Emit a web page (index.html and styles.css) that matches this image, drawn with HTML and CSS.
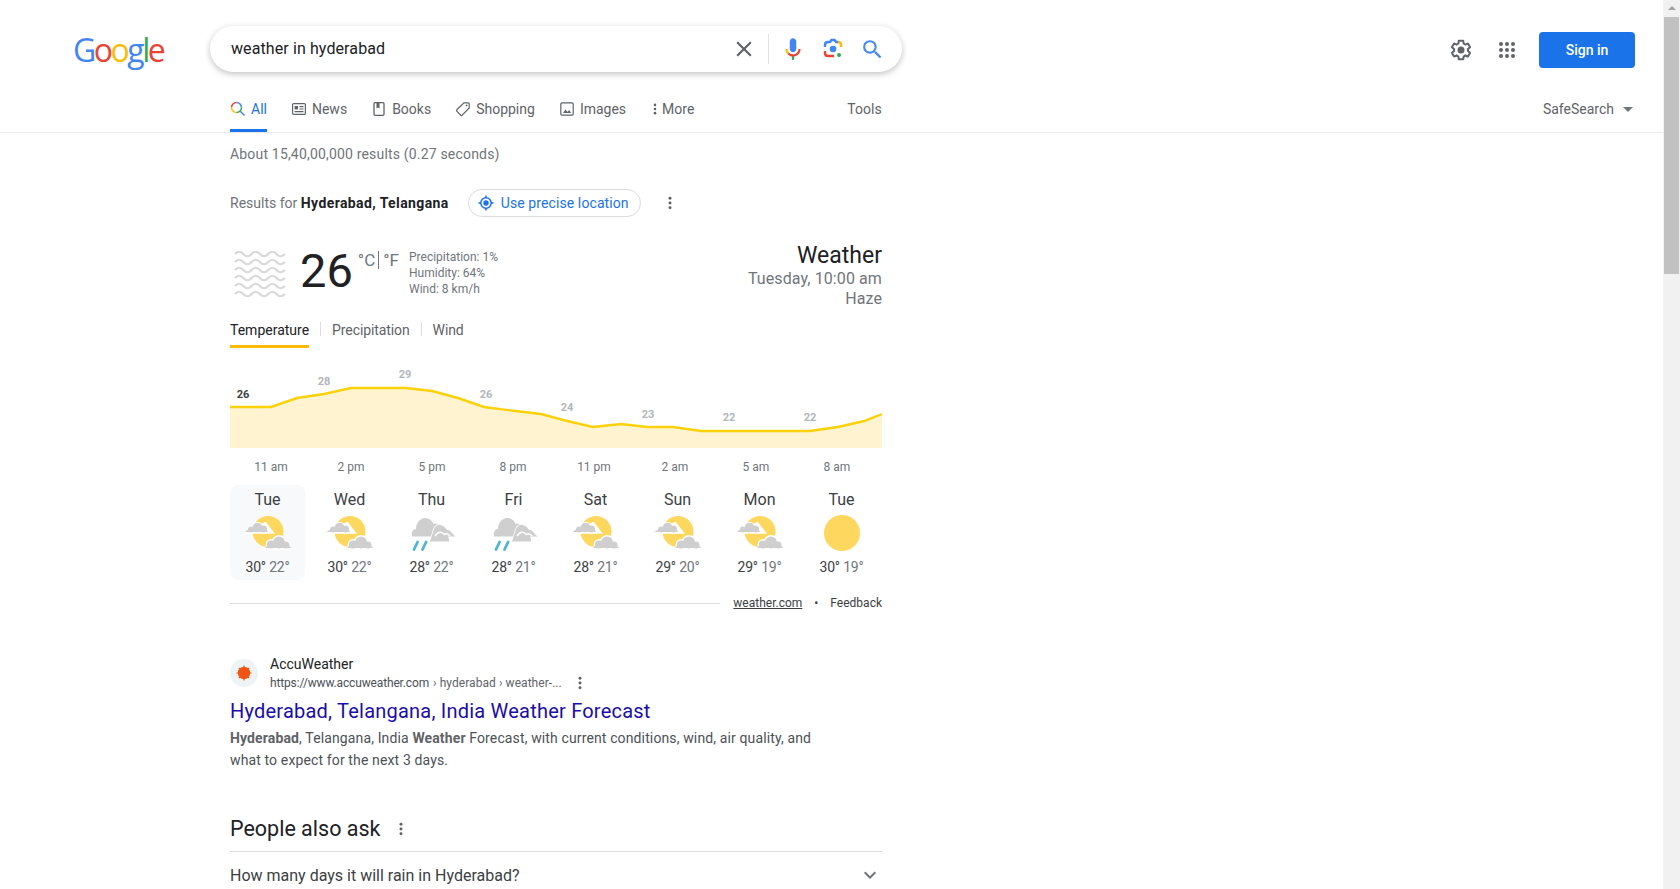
FILE: index.html
```html
<!DOCTYPE html>
<html lang="en">
<head>
    <meta charset="UTF-8">
    <title>weather in hyderabad - Google Search</title>
    <link rel="stylesheet" href="styles.css">
</head>
<body>
    <!-- shared weather icons -->
    <svg class="defs" width="0" height="0">
        <symbol id="partly" viewBox="0 0 48 48">
            <circle cx="24" cy="22.500" r="15.500" fill="#fed75f"/>
            <path d="M21 13l8.500 11H0" fill="#fff" stroke="#fff" stroke-width="1.400"/>
            <!-- top cloud -->
            <g fill="#fff">
                <circle cx="7" cy="20.500" r="4"/><circle cx="13.500" cy="18.500" r="5.800"/><circle cx="19.500" cy="20" r="4.500"/>
            </g>
            <g fill="#cfcfcf">
                <circle cx="7" cy="20.500" r="3"/><circle cx="13.500" cy="18.500" r="4.800"/><circle cx="19.500" cy="20" r="3.500"/>
                <path d="M.5 23 4 20.500h18l2.500 2.500z"/>
            </g>
            <!-- bottom cloud -->
            <g fill="#fff">
                <circle cx="27" cy="35.500" r="5.400"/><circle cx="35" cy="33.500" r="7.400"/><circle cx="42" cy="36" r="4.900"/>
                <path d="M19 40.500h30L42 32H26z"/>
            </g>
            <g fill="#cfcfcf">
                <circle cx="27" cy="35.500" r="4"/><circle cx="35" cy="33.500" r="6"/><circle cx="42" cy="36" r="3.500"/>
                <path d="M21 39l3-3.500h19.500l4 3.500z"/>
            </g>
        </symbol>
        <symbol id="rainy" viewBox="0 0 48 48">
            <path d="M4 27.500C3 23 5 20 8 20c0-6 4-11 9-11 4 0 7 2 8.500 6 2.500-1 4.500 0 5.500 2l-5 10.500z" fill="#cfcfcf"/>
            <path d="M22 32.500 26 20c1-3 4-5 7-4 3 1 5 3 6 5 2-.5 4 1 5 3l3.500 3.500H40c1 1.500 1 3.500 1 5z" fill="#cfcfcf" stroke="#fff" stroke-width="1.600" paint-order="stroke"/>
            <path d="M27 27c3-5 7-4.500 9.500-1.500 2-1.500 4-.5 5.500 1.500" fill="none" stroke="#fff" stroke-width="1.500"/>
            <path d="M6 40.500l3.600-7.500M14.500 40.500l3.600-7.500" stroke="#4fb6d2" stroke-width="2.800" stroke-linecap="round" fill="none"/>
        </symbol>
        <symbol id="sunny" viewBox="0 0 48 48">
            <circle cx="24" cy="24" r="18" fill="#fed75f"/>
        </symbol>
        <symbol id="dots" viewBox="0 0 4 16">
            <circle cx="2" cy="2.500" r="1.700"/>
            <circle cx="2" cy="8" r="1.700"/>
            <circle cx="2" cy="13.500" r="1.700"/>
        </symbol>
    </svg>

    <div class="page">
        <header class="header">
            <div class="top-row">
                <a class="logo"><span class="g-blue">G</span><span class="g-red">o</span><span class="g-yellow">o</span><span class="g-blue">g</span><span class="g-green">l</span><span class="g-red">e</span></a>

                <div class="search-box">
                    <div class="query">weather in hyderabad</div>
                    <svg class="icon-clear" viewBox="0 0 24 24"><path fill="#5f6368" d="M19 6.410 17.590 5 12 10.590 6.410 5 5 6.410 10.590 12 5 17.590 6.410 19 12 13.410 17.590 19 19 17.590 13.410 12z"/></svg>
                    <span class="search-sep"></span>
                    <svg class="icon-mic" viewBox="0 0 24 24">
                        <path fill="#4285f4" d="m12 15c1.660 0 3-1.310 3-2.970v-7.020c0-1.660-1.340-3.010-3-3.010s-3 1.340-3 3.010v7.020c0 1.660 1.340 2.970 3 2.970z"/>
                        <path fill="#34a853" d="m11 18.080h2v3.920h-2z"/>
                        <path fill="#fbbc05" d="m7.050 16.870c-1.270-1.330-2.050-2.830-2.050-4.870h2c0 1.450 .56 2.420 1.470 3.380v.32l-1.150 1.180z"/>
                        <path fill="#ea4335" d="m12 16.930a4.970 5.250 0 0 1 -3.540 -1.550l-1.410 1.490c1.260 1.340 3.020 2.130 4.950 2.130 3.870 0 6.990-2.920 6.990-6.990h-1.990c0 2.920-2.240 4.920-4.990 4.920z"/>
                    </svg>
                    <svg class="icon-lens" viewBox="0 0 24 24" fill="none" stroke-width="2.400">
                        <path stroke="#4285f4" d="M4 10V8c0-2 1.200-3 3-3h2l1.500-2h3L15 5h2"/>
                        <path stroke="#fbbc05" d="M17 5c2 0 3 1 3 3v2"/>
                        <path stroke="#ea4335" d="M4 14v2c0 2 1.200 3 3 3h6"/>
                        <circle cx="12" cy="12" r="3.300" fill="#4285f4" stroke="none"/>
                        <circle cx="18" cy="18" r="2" fill="#34a853" stroke="none"/>
                    </svg>
                    <svg class="icon-search" viewBox="0 0 24 24"><path fill="#4285f4" d="M15.500 14h-.79l-.28-.27A6.471 6.471 0 0 0 16 9.500 6.500 6.500 0 1 0 9.500 16c1.610 0 3.090-.59 4.230-1.570l.27.28v.79l5 4.990L20.490 19l-4.990-5zm-6 0C7.010 14 5 11.990 5 9.500S7.010 5 9.500 5 14 7.010 14 9.500 11.990 14 9.500 14z"/></svg>
                </div>

                <div class="header-right">
                    <svg class="icon-gear" viewBox="0 0 24 24"><path fill="#5f6368" d="M13.850 22.250h-3.700c-.74 0-1.360-.54-1.450-1.270l-.27-1.890c-.27-.14-.53-.29-.79-.46l-1.800.72c-.7.26-1.470-.03-1.810-.65L2.200 15.530c-.35-.66-.2-1.440.36-1.880l1.530-1.190c-.01-.15-.02-.3-.02-.46 0-.15.01-.31.02-.46l-1.520-1.190c-.59-.45-.74-1.260-.37-1.880l1.850-3.190c.34-.62 1.110-.9 1.790-.63l1.810.73c.26-.17.52-.32.78-.46l.27-1.910c.09-.7.71-1.250 1.440-1.250h3.700c.74 0 1.360.54 1.450 1.270l.27 1.890c.27.14.53.29.79.46l1.800-.72c.71-.26 1.480.03 1.820.65l1.840 3.180c.36.66.2 1.440-.36 1.880l-1.520 1.190c.01.15.02.3.02.46s-.01.31-.02.46l1.520 1.190c.56.45.72 1.230.37 1.860l-1.860 3.220c-.34.62-1.110.9-1.800.63l-1.800-.72c-.26.17-.52.32-.78.46l-.27 1.910c-.1.68-.72 1.220-1.460 1.220zm-3.230-2h2.760l.37-2.550.53-.22c.44-.18.88-.44 1.340-.78l.45-.34 2.380.96 1.380-2.400-2.030-1.580.07-.56c.03-.26.06-.51.06-.78s-.03-.53-.06-.78l-.07-.56 2.030-1.580-1.390-2.400-2.390.96-.45-.35c-.42-.32-.87-.58-1.330-.77l-.52-.22-.37-2.550h-2.760l-.37 2.550-.53.21c-.44.19-.88.44-1.340.79l-.45.33-2.380-.95-1.390 2.390 2.030 1.580-.07.56a7 7 0 0 0-.06.79c0 .26.02.53.06.78l.07.56-2.030 1.580 1.380 2.400 2.390-.96.45.35c.43.33.86.58 1.330.77l.53.22.38 2.550z"/><circle cx="12" cy="12" r="3.500" fill="#5f6368"/></svg>
                    <svg class="icon-apps" viewBox="1 1 16 16" fill="#5f6368">
                        <circle cx="3" cy="3" r="2"/><circle cx="9" cy="3" r="2"/><circle cx="15" cy="3" r="2"/>
                        <circle cx="3" cy="9" r="2"/><circle cx="9" cy="9" r="2"/><circle cx="15" cy="9" r="2"/>
                        <circle cx="3" cy="15" r="2"/><circle cx="9" cy="15" r="2"/><circle cx="15" cy="15" r="2"/>
                    </svg>
                    <a class="sign-in">Sign in</a>
                </div>
            </div>

            <nav class="tabs">
                <a class="tab active">
                    <svg class="tab-icon" viewBox="0 0 16 16" fill="none" stroke-width="1.500">
                        <path stroke="#4285f4" d="M6.500 1.500a5 5 0 0 1 5 5"/>
                        <path stroke="#ea4335" d="M6.500 1.500a5 5 0 0 0-5 5"/>
                        <path stroke="#fbbc05" d="M1.500 6.500a5 5 0 0 0 5 5"/>
                        <path stroke="#34a853" d="M6.500 11.500a5 5 0 0 0 5-5"/>
                        <path stroke="#4285f4" d="M10.300 10.300l4.200 4.200"/>
                    </svg>
                    All
                </a>
                <a class="tab">
                    <svg class="tab-icon" viewBox="0 0 16 16" fill="none" stroke="#5f6368" stroke-width="1.200">
                        <rect x="1.600" y="2.600" width="12.800" height="10.800" rx="1"/>
                        <rect x="3.600" y="5" width="3.400" height="3.400" fill="#5f6368" stroke="none"/>
                        <path d="M8.500 5.600h4M8.500 8h4M3.600 10.600h8.900"/>
                    </svg>
                    News
                </a>
                <a class="tab">
                    <svg class="tab-icon" viewBox="0 0 16 16" fill="none" stroke="#5f6368" stroke-width="1.300">
                        <rect x="3" y="1.700" width="10" height="12.600" rx="1"/>
                        <path d="M5.500 2v5.500l1.500-1 1.500 1V2z" fill="#5f6368" stroke="none"/>
                    </svg>
                    Books
                </a>
                <a class="tab">
                    <svg class="tab-icon" viewBox="0 0 16 16" fill="none" stroke="#5f6368" stroke-width="1.200">
                        <path d="M9 1.800h4.200a1 1 0 0 1 1 1V7l-7 7.200a1 1 0 0 1-1.400 0l-4-4a1 1 0 0 1 0-1.400z"/>
                        <circle cx="11.600" cy="4.400" r=".9" fill="#5f6368" stroke="none"/>
                    </svg>
                    Shopping
                </a>
                <a class="tab">
                    <svg class="tab-icon" viewBox="0 0 16 16" fill="none" stroke="#5f6368" stroke-width="1.200">
                        <rect x="1.800" y="1.800" width="12.400" height="12.400" rx="1.200"/>
                        <path d="M4 12l2.500-3.500L8.500 11l1.800-2L12 12z" fill="#5f6368" stroke="none"/>
                    </svg>
                    Images
                </a>
                <a class="tab tab-more">
                    <svg class="tab-dots"><use href="#dots"/></svg>
                    More
                </a>
                <a class="tab tab-tools">Tools</a>
                <a class="tab tab-safe">SafeSearch <span class="caret"></span></a>
            </nav>
        </header>

        <main class="main">
            <div class="stats">About 15,40,00,000 results (0.27 seconds)</div>

            <div class="location-row">
                <span>Results for <b>Hyderabad, Telangana</b></span>
                <a class="location-chip">
                    <svg class="icon-target" viewBox="0 0 16 16" fill="none" stroke="#1a73e8">
                        <circle cx="8" cy="8" r="5.200" stroke-width="1.500"/>
                        <circle cx="8" cy="8" r="2.700" fill="#1a73e8" stroke="none"/>
                        <path d="M8 .5v2.500M8 13v2.500M.5 8H3M13 8h2.500" stroke-width="1.500"/>
                    </svg>
                    Use precise location
                </a>
                <svg class="more-dots"><use href="#dots"/></svg>
            </div>

            <section class="weather">
                <div class="now">
                    <svg class="icon-haze" viewBox="0 0 52 46" fill="none" stroke="#d8d8d8" stroke-width="2">
                        <path d="M1 3q4.150-4.500 8.300 0t8.300 0 8.300 0 8.300 0 8.300 0 8.300 0"/>
                        <path d="M1 11q4.150-4.500 8.300 0t8.300 0 8.300 0 8.300 0 8.300 0 8.300 0"/>
                        <path d="M1 19q4.150-4.500 8.300 0t8.300 0 8.300 0 8.300 0 8.300 0 8.300 0"/>
                        <path d="M1 27q4.150-4.500 8.300 0t8.300 0 8.300 0 8.300 0 8.300 0 8.300 0"/>
                        <path d="M1 35q4.150-4.500 8.300 0t8.300 0 8.300 0 8.300 0 8.300 0 8.300 0"/>
                        <path d="M1 43q4.150-4.500 8.300 0t8.300 0 8.300 0 8.300 0 8.300 0 8.300 0"/>
                    </svg>
                    <div class="temp">26</div>
                    <div class="units">°C<span class="unit-sep"></span>°F</div>
                    <ul class="details">
                        <li>Precipitation: 1%</li>
                        <li>Humidity: 64%</li>
                        <li>Wind: 8 km/h</li>
                    </ul>
                    <div class="summary">
                        <div class="summary-title">Weather</div>
                        <div>Tuesday, 10:00 am</div>
                        <div>Haze</div>
                    </div>
                </div>

                <div class="chart-tabs">
                    <a class="chart-tab selected">Temperature</a>
                    <a class="chart-tab">Precipitation</a>
                    <a class="chart-tab">Wind</a>
                </div>

                <svg class="chart" viewBox="230 360 652 118" width="652" height="118">
                    <path class="chart-fill" d="M230 407H271L297 398 324 394 351 388H406L432 391 458 398 484 407 515 411 541 414 567 421 593 427 621 424 647 427H673L701 431H810L838 427 864 421 882 414V448H230Z"/>
                    <path class="chart-line" d="M230 407H271L297 398 324 394 351 388H406L432 391 458 398 484 407 515 411 541 414 567 421 593 427 621 424 647 427H673L701 431H810L838 427 864 421 882 414"/>
                    <g class="chart-values">
                        <text class="current" x="243" y="398">26</text>
                        <text x="324" y="385">28</text>
                        <text x="405" y="378">29</text>
                        <text x="486" y="398">26</text>
                        <text x="567" y="411">24</text>
                        <text x="648" y="418">23</text>
                        <text x="729" y="421">22</text>
                        <text x="810" y="421">22</text>
                    </g>
                    <g class="chart-times">
                        <text x="271" y="471">11 am</text>
                        <text x="351" y="471">2 pm</text>
                        <text x="432" y="471">5 pm</text>
                        <text x="513" y="471">8 pm</text>
                        <text x="594" y="471">11 pm</text>
                        <text x="675" y="471">2 am</text>
                        <text x="756" y="471">5 am</text>
                        <text x="837" y="471">8 am</text>
                    </g>
                </svg>

                <div class="days">
                    <div class="day selected"><div class="day-name">Tue</div><svg class="day-icon"><use href="#partly"/></svg><div class="day-temps">30° <span>22°</span></div></div>
                    <div class="day"><div class="day-name">Wed</div><svg class="day-icon"><use href="#partly"/></svg><div class="day-temps">30° <span>22°</span></div></div>
                    <div class="day"><div class="day-name">Thu</div><svg class="day-icon"><use href="#rainy"/></svg><div class="day-temps">28° <span>22°</span></div></div>
                    <div class="day"><div class="day-name">Fri</div><svg class="day-icon"><use href="#rainy"/></svg><div class="day-temps">28° <span>21°</span></div></div>
                    <div class="day"><div class="day-name">Sat</div><svg class="day-icon"><use href="#partly"/></svg><div class="day-temps">28° <span>21°</span></div></div>
                    <div class="day"><div class="day-name">Sun</div><svg class="day-icon"><use href="#partly"/></svg><div class="day-temps">29° <span>20°</span></div></div>
                    <div class="day"><div class="day-name">Mon</div><svg class="day-icon"><use href="#partly"/></svg><div class="day-temps">29° <span>19°</span></div></div>
                    <div class="day"><div class="day-name">Tue</div><svg class="day-icon"><use href="#sunny"/></svg><div class="day-temps">30° <span>19°</span></div></div>
                </div>

                <div class="weather-foot">
                    <span class="foot-line"></span>
                    <a class="foot-source">weather.com</a>
                    <span class="foot-bullet">•</span>
                    <a>Feedback</a>
                </div>
            </section>

            <article class="result">
                <div class="result-source">
                    <span class="favicon">
                        <svg viewBox="0 0 18 18" width="18" height="18">
                            <circle cx="9" cy="9" r="6.200" fill="#f05514"/>
                            <g stroke="#f05514" stroke-width="1.200">
                                <path d="M9 1.500v15M1.500 9h15M3.800 3.800l10.400 10.400M14.200 3.800 3.800 14.200"/>
                            </g>
                        </svg>
                    </span>
                    <div class="source-text">
                        <div class="source-name">AccuWeather</div>
                        <div class="source-url">https://www.accuweather.com <span>› hyderabad › weather-...</span>
                            <svg class="url-dots"><use href="#dots"/></svg>
                        </div>
                    </div>
                </div>
                <h3 class="result-title">Hyderabad, Telangana, India Weather Forecast</h3>
                <p class="snippet"><b>Hyderabad</b>, Telangana, India <b>Weather</b> Forecast, with current conditions, wind, air quality, and<br>what to expect for the next 3 days.</p>
            </article>

            <section class="paa">
                <h2 class="paa-title">People also ask <svg class="more-dots"><use href="#dots"/></svg></h2>
                <div class="paa-row">
                    <span>How many days it will rain in Hyderabad?</span>
                    <svg class="chevron" viewBox="0 0 24 24"><path fill="#70757a" d="M16.590 8.590 12 13.170 7.410 8.590 6 10l6 6 6-6z"/></svg>
                </div>
            </section>
        </main>
    </div>

    <div class="scrollbar">
        <span class="scroll-arrow"></span>
        <span class="scroll-thumb"></span>
    </div>
</body>
</html>
```

FILE: styles.css
```css
* {
    box-sizing: border-box;
}
html, body {
    height: 100%;
}
body {
    margin: 0;
    display: flex;
    overflow: hidden;
    background: #fff;
    color: #202124;
    font-family: Roboto, "Liberation Sans", Arial, sans-serif;
    font-size: 14px;
}
a {
    color: inherit;
    text-decoration: none;
}
.defs {
    position: absolute;
}
.page {
    flex: 1;
    min-width: 0;
}

/* header */
.header {
    height: 133px;
    border-bottom: 1px solid #ebebeb;
}
.top-row {
    display: flex;
    align-items: center;
    height: 46px;
    margin-top: 26px;
    position: absolute;
    left: 0;
    right: 17px;
}
.logo {
    width: 210px;
    padding: 1px 0 0 73px;
    font-family: "Open Sans", sans-serif;
    font-size: 32px;
    font-weight: 500;
    letter-spacing: -2.500px;
    line-height: 46px;
}
.g-blue { color: #4285f4; }
.g-red { color: #ea4335; }
.g-yellow { color: #fbbc05; }
.g-green { color: #34a853; }
.search-box {
    width: 692px;
    height: 46px;
    display: flex;
    align-items: center;
    padding: 0 17px 0 21px;
    border-radius: 23px;
    background: #fff;
    box-shadow: 0 2px 6px rgba(32, 33, 36, 0.28);
}
.query {
    flex: 1;
    padding-bottom: 2px;
    font-size: 16px;
    letter-spacing: .1px;
    color: #202124;
}
.icon-clear {
    width: 26px;
    height: 26px;
}
.search-sep {
    width: 1px;
    height: 30px;
    margin: 0 11px;
    background: #dfe1e5;
}
.icon-mic {
    width: 26px;
    height: 26px;
}
.icon-lens {
    width: 24px;
    height: 24px;
    margin-left: 15px;
}
.icon-search {
    width: 25px;
    height: 25px;
    margin-left: 15px;
}
.header-right {
    margin-left: auto;
    display: flex;
    align-items: center;
    padding: 2px 28px 0 0;
}
.icon-gear {
    width: 24px;
    height: 24px;
}
.icon-apps {
    width: 16px;
    height: 16px;
    margin-left: 26px;
}
.sign-in {
    width: 96px;
    height: 36px;
    margin-left: 24px;
    border-radius: 4px;
    background: #1a73e8;
    color: #fff;
    font-weight: 500;
    font-size: 14px;
    line-height: 36px;
    text-align: center;
}
.tabs {
    display: flex;
    align-items: flex-start;
    gap: 24px;
    padding: 100px 30px 0 230px;
    height: 132px;
    color: #5f6368;
}
.tab {
    display: flex;
    align-items: flex-start;
    gap: 5px;
    height: 32px;
    line-height: 18px;
}
.tab.active {
    color: #1a73e8;
    border-bottom: 3px solid #1a73e8;
}
.tab-icon {
    width: 16px;
    height: 16px;
    margin-top: 1px;
}
.tab-dots {
    width: 4px;
    height: 12px;
    margin-top: 3px;
    fill: #5f6368;
}
.tab-more {
    margin-left: 3px;
}
.tab-tools {
    margin-left: 129px;
}
.tab-safe {
    margin-left: auto;
    gap: 9px;
}
.caret {
    margin-top: 7px;
    border: 5px solid transparent;
    border-top-color: #70757a;
    border-bottom-width: 0;
}

/* main column */
.main {
    width: 882px;
    padding: 0 0 0 230px;
}
.stats {
    margin-top: 11px;
    line-height: 20px;
    letter-spacing: .18px;
    color: #70757a;
}
.location-row {
    display: flex;
    align-items: center;
    margin-top: 25px;
    height: 28px;
    color: #70757a;
}
.location-row b {
    letter-spacing: .4px;
    color: #202124;
}
.location-chip {
    display: flex;
    align-items: center;
    gap: 7px;
    height: 28px;
    margin-left: 19px;
    padding: 0 11px 0 9px;
    border: 1px solid #dadce0;
    border-radius: 14px;
    letter-spacing: .1px;
    color: #1a73e8;
}
.icon-target {
    width: 16px;
    height: 16px;
}
.more-dots {
    width: 4px;
    height: 14px;
    fill: #5f6368;
}
.location-row .more-dots {
    margin-left: 27px;
}

/* weather card */
.weather {
    width: 652px;
}
.now {
    display: flex;
    align-items: flex-start;
    margin-top: 22px;
    height: 73px;
}
.icon-haze {
    width: 52px;
    height: 46px;
    margin: 12px 0 0 4px;
}
.temp {
    margin: 2px 0 0 14px;
    font-size: 47px;
    line-height: 60px;
    color: #202124;
}
.units {
    display: flex;
    align-items: center;
    margin: 11px 0 0 5px;
    font-size: 17px;
    line-height: 20px;
    color: #70757a;
}
.unit-sep {
    width: 1px;
    height: 18px;
    margin: 0 4px 0 3px;
    background: #70757a;
}
.details {
    list-style: none;
    margin: 10px 0 0 10px;
    padding: 0;
    font-size: 12px;
    line-height: 16px;
    color: #70757a;
}
.summary {
    margin-left: auto;
    text-align: right;
    font-size: 16px;
    line-height: 20px;
    letter-spacing: .1px;
    color: #70757a;
}
.summary-title {
    margin-top: 2px;
    margin-bottom: -2px;
    font-size: 23px;
    line-height: 30px;
    letter-spacing: 0;
    color: #202124;
}
.chart-tabs {
    display: flex;
    margin-top: 8px;
    height: 28px;
    color: #5f6368;
}
.chart-tab {
    height: 28px;
    padding: 0 11px;
    line-height: 20px;
    letter-spacing: -.1px;
    position: relative;
    border-left: 1px solid transparent;
}
.chart-tab + .chart-tab::before {
    content: "";
    position: absolute;
    left: -1px;
    top: 2px;
    height: 14px;
    width: 1px;
    background: #dadce0;
}
.chart-tab.selected {
    padding: 0;
    margin-right: 11px;
    letter-spacing: 0;
    border-left: 0;
    border-bottom: 3px solid #fbbc04;
    color: #202124;
}
.chart {
    display: block;
    margin-top: 12px;
}
.chart-fill {
    fill: #fff4cf;
}
.chart-line {
    fill: none;
    stroke: #fbd10a;
    stroke-width: 2.400;
}
.chart-values text {
    font-size: 11px;
    font-weight: 700;
    fill: #b3b6ba;
    text-anchor: middle;
}
.chart-values .current {
    fill: #3c4043;
}
.chart-times text {
    font-size: 12px;
    fill: #70757a;
    text-anchor: middle;
}
.days {
    display: grid;
    grid-template-columns: repeat(8, 75px);
    gap: 7px;
    margin-top: 7px;
}
.day {
    height: 95px;
    padding-top: 5px;
    border-radius: 8px;
    text-align: center;
}
.day.selected {
    background: #f8f9fa;
}
.day-name {
    font-size: 16px;
    line-height: 20px;
    color: #3c4043;
}
.day-icon {
    display: block;
    width: 48px;
    height: 48px;
    margin: -1px auto 0;
}
.day-temps {
    line-height: 20px;
    letter-spacing: -.2px;
    color: #3c4043;
}
.day-temps span {
    color: #70757a;
}
.weather-foot {
    display: flex;
    align-items: center;
    margin-top: 14px;
    height: 18px;
    font-size: 12px;
    color: #3c4043;
}
.foot-line {
    flex: 1;
    height: 1px;
    margin-right: 13px;
    background: #dadce0;
}
.foot-source {
    text-decoration: underline;
}
.foot-bullet {
    margin: 0 12px;
}

/* search result */
.result {
    width: 600px;
    margin-top: 42px;
}
.result-source {
    display: flex;
    align-items: center;
    gap: 12px;
}
.favicon {
    display: flex;
    align-items: center;
    justify-content: center;
    width: 28px;
    height: 28px;
    border-radius: 50%;
    background: #eef3f5;
}
.source-name {
    line-height: 20px;
    color: #202124;
}
.source-url {
    display: flex;
    align-items: center;
    gap: 4px;
    font-size: 12px;
    line-height: 18px;
    letter-spacing: -.15px;
    color: #4d5156;
}
.source-url span {
    letter-spacing: .05px;
    color: #5f6368;
}
.url-dots {
    width: 4px;
    height: 14px;
    margin-left: 12px;
    fill: #5f6368;
}
.result-title {
    margin: 6px 0 0;
    font-size: 20px;
    font-weight: 400;
    line-height: 26px;
    letter-spacing: .22px;
    color: #1a0dab;
}
.snippet {
    margin: 3px 0 0;
    line-height: 22px;
    letter-spacing: .13px;
    color: #4d5156;
}
.snippet b {
    color: #5f6368;
}

/* people also ask */
.paa {
    width: 652px;
    margin-top: 44px;
}
.paa-title {
    display: flex;
    align-items: center;
    gap: 19px;
    margin: 0;
    padding-bottom: 8px;
    border-bottom: 1px solid #dadce0;
    font-size: 21.500px;
    font-weight: 400;
    line-height: 28px;
}
.paa-row {
    display: flex;
    justify-content: space-between;
    align-items: center;
    padding-right: 0;
    height: 46px;
    font-size: 16px;
    color: #3c4043;
}
.chevron {
    width: 24px;
    height: 24px;
}

/* fake window scrollbar */
.scrollbar {
    flex: 0 0 17px;
    background: #f1f1f1;
}
.scroll-arrow {
    display: block;
    width: 0;
    margin: 6px auto 0;
    border: 4px solid transparent;
    border-bottom-color: #a3a3a3;
    border-top-width: 0;
    border-left-width: 4px;
    height: 0;
}
.scroll-thumb {
    display: block;
    height: 257px;
    margin: 7px 1px 0;
    background: #c1c1c1;
}
```
